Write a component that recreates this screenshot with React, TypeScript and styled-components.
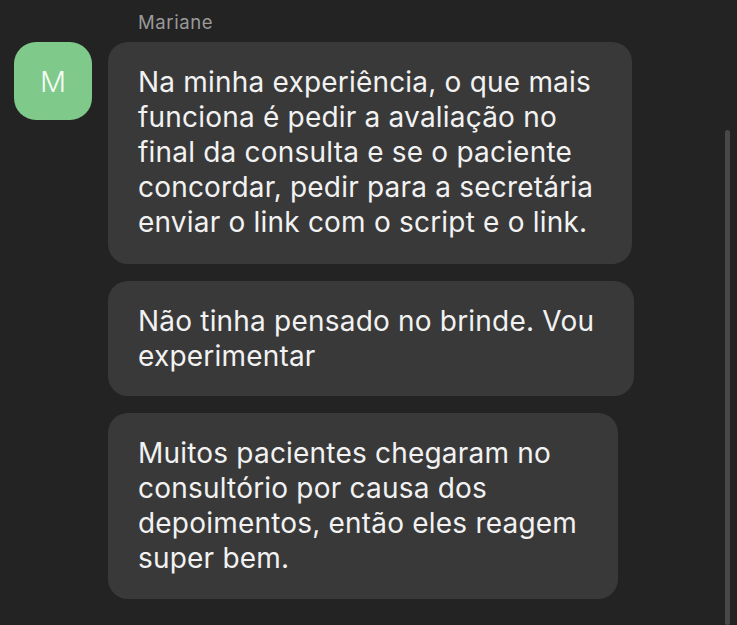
import React from 'react';
import styled, { createGlobalStyle } from 'styled-components';

const GlobalStyle = createGlobalStyle`
  html, body {
    margin: 0;
    padding: 0;
    background: #232323;
  }
  body {
    font-family: Inter, "Noto Sans", "Liberation Sans", sans-serif;
    -webkit-font-smoothing: antialiased;
  }
`;

const Screen = styled.div`
  position: relative;
  width: 737px;
  height: 625px;
  overflow: hidden;
  background: #232323;
`;

const Thread = styled.div`
  display: grid;
  grid-template-columns: 78px auto;
  column-gap: 16px;
  row-gap: 10px;
  padding: 12px 0 0 14px;
  align-items: start;
`;

const SenderName = styled.div`
  grid-column: 2;
  padding-left: 30px;
  font-size: 18.5px;
  line-height: 20px;
  color: #9a9a9a;
  letter-spacing: 0.6px;
`;

const Avatar = styled.div`
  grid-column: 1;
  width: 78px;
  height: 78px;
  border-radius: 22px;
  background: #7fc98b;
  display: flex;
  align-items: center;
  justify-content: center;
  color: #f4fbf4;
  font-size: 29px;
  font-weight: 300;
`;

const Bubbles = styled.div`
  grid-column: 2;
  display: flex;
  flex-direction: column;
  gap: 17px;
`;

const Bubble = styled.div<{ $width: number; $height: number }>`
  box-sizing: border-box;
  width: ${(p) => p.$width}px;
  height: ${(p) => p.$height}px;
  padding: 23px 20px 0 30px;
  border-radius: 20px;
  background: #393939;
  color: #f2f2f2;
  font-size: 28px;
  line-height: 35px;
  letter-spacing: 0.2px;
  white-space: nowrap;
`;

const Line = styled.div``;

const Scrollbar = styled.div`
  position: absolute;
  right: 7px;
  top: 130px;
  bottom: 0;
  width: 5px;
  border-radius: 3px;
  background: #484848;
`;

const messages = [
  {
    width: 524,
    height: 222,
    lines: [
      'Na minha experiência, o que mais',
      'funciona é pedir a avaliação no',
      'final da consulta e se o paciente',
      'concordar, pedir para a secretária',
      'enviar o link com o script e o link.',
    ],
  },
  {
    width: 526,
    height: 115,
    lines: ['Não tinha pensado no brinde. Vou', 'experimentar'],
  },
  {
    width: 510,
    height: 186,
    lines: [
      'Muitos pacientes chegaram no',
      'consultório por causa dos',
      'depoimentos, então eles reagem',
      'super bem.',
    ],
  },
];

export default function App() {
  return (
    <>
      <GlobalStyle />
      <Screen>
        <Thread>
          <SenderName>Mariane</SenderName>
          <Avatar>M</Avatar>
          <Bubbles>
            {messages.map((m, i) => (
              <Bubble key={i} $width={m.width} $height={m.height}>
                {m.lines.map((l, j) => (
                  <Line key={j}>{l}</Line>
                ))}
              </Bubble>
            ))}
          </Bubbles>
        </Thread>
        <Scrollbar />
      </Screen>
    </>
  );
}
